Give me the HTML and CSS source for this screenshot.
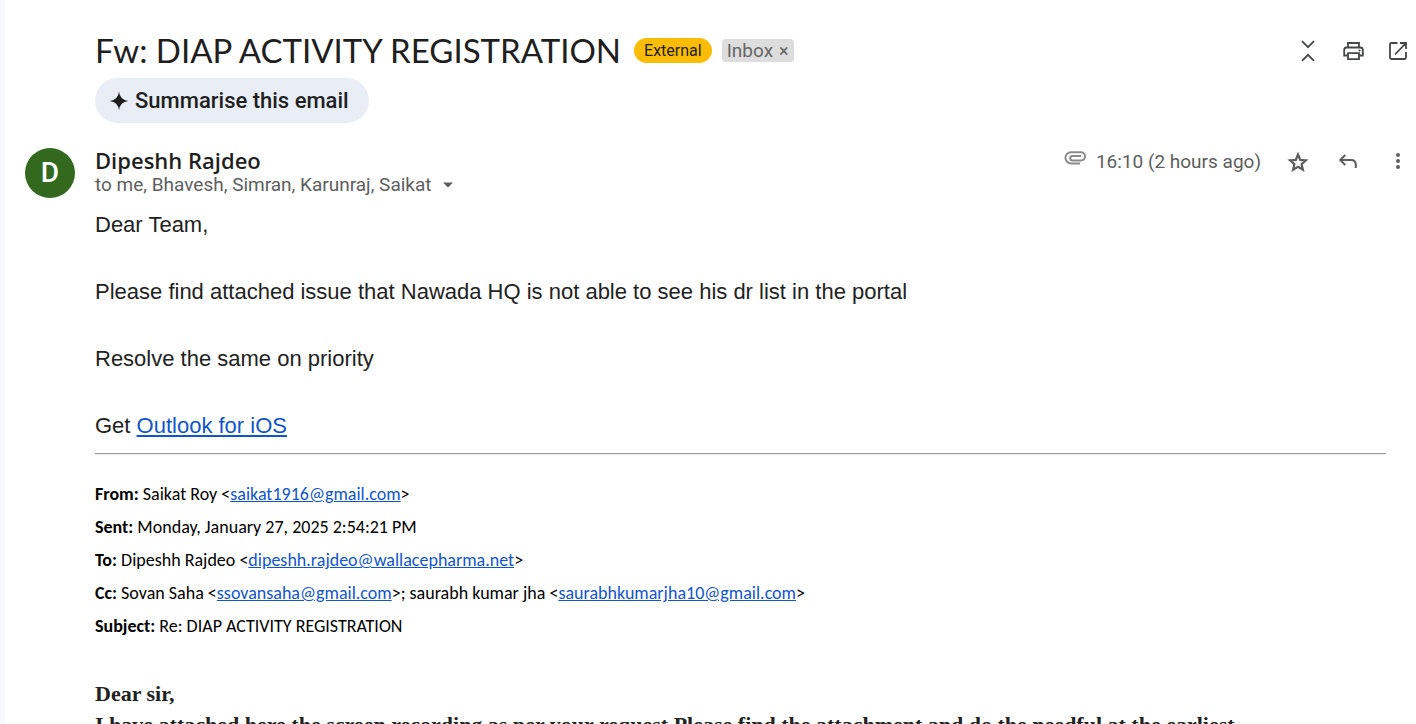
FILE: index.html
```
<!DOCTYPE html>
<html lang="en">
<head>
<meta charset="utf-8">
<meta name="viewport" content="width=device-width, initial-scale=1">
<title>Fw: DIAP ACTIVITY REGISTRATION</title>
<link rel="stylesheet" href="styles.css">
</head>
<body>
<main class="thread">
  <header class="subject-bar">
    <div class="subject">
      <h1 class="subject-title">Fw: DIAP ACTIVITY REGISTRATION</h1>
      <span class="tag-external">External</span>
      <span class="tag-inbox">Inbox <button class="tag-remove" type="button" aria-label="Remove label">×</button></span>
    </div>
    <div class="tools">
      <button class="icon-btn" type="button" aria-label="Collapse all"><svg width="26" height="26" viewBox="0 0 26 26"><path d="M7 3.2l6 6 6-6M7 22.8l6-6 6 6" fill="none" stroke="currentColor" stroke-width="1.8"/></svg></button>
      <button class="icon-btn" type="button" aria-label="Print all"><svg width="26" height="26" viewBox="0 0 26 26"><g fill="none" stroke="currentColor" stroke-width="1.8"><path d="M8 9.500V5h11v4.500M8 17.500H4.200V12c0-1.600 1-2.500 2.500-2.500h13.600c1.500 0 2.500.9 2.500 2.500v5.500H19"/><path d="M8 15.200h11v6H8z"/></g><circle cx="19.500" cy="12.600" r="1" fill="currentColor"/></svg></button>
      <button class="icon-btn" type="button" aria-label="In new window"><svg width="26" height="26" viewBox="0 0 26 26"><path d="M12.500 5H6.400Q5 5 5 6.400v13.200Q5 21 6.400 21h13.200q1.400 0 1.400-1.400V14M15 5h6v6M21 5L10 16.500" fill="none" stroke="currentColor" stroke-width="1.800"/></svg></button>
    </div>
  </header>

  <button class="summarise" type="button"><svg width="20" height="20" viewBox="0 0 20 20"><path d="M10 .8Q11 9 19.200 10 11 11 10 19.200 9 11 .8 10 9 9 10 .8z" fill="currentColor"/><path d="M10 5.500L14.500 10 10 14.500 5.500 10z" fill="currentColor"/></svg>Summarise this email</button>

  <article class="message">
    <div class="avatar">D</div>
    <div class="message-main">
      <div class="message-head">
        <div>
          <h2 class="sender">Dipeshh Rajdeo</h2>
          <button class="recipients" type="button">to me, Bhavesh, Simran, Karunraj, Saikat<svg width="10" height="6" viewBox="0 0 10 6"><path d="M0 .5h10L5 5.500z" fill="currentColor"/></svg></button>
        </div>
        <div class="meta">
          <svg class="clip" width="22" height="14" viewBox="0 0 22 14"><path d="M16 12.400H7A5.600 5.600 0 0 1 7 1.200h10a4 4 0 0 1 0 8.200H8.500a2.200 2.200 0 0 1 0-4.400H17" fill="none" stroke="currentColor" stroke-width="2"/></svg>
          <time class="time">16:10 (2 hours ago)</time>
          <button class="icon-btn" type="button" aria-label="Star"><svg width="26" height="26" viewBox="0 0 26 26"><path d="M13 5.500l2.200 5.400 5.700.5-4.300 3.800 1.300 5.600-4.900-3-4.900 3 1.300-5.600-4.300-3.800 5.700-.5z" fill="none" stroke="currentColor" stroke-width="2.200"/></svg></button>
          <button class="icon-btn" type="button" aria-label="Reply"><svg width="26" height="26" viewBox="0 0 26 26"><path d="M10.300 6L5.200 11l5.100 5M5.200 11H16q4.800 0 4.800 4.800V19" fill="none" stroke="currentColor" stroke-width="2"/></svg></button>
          <button class="icon-btn" type="button" aria-label="More"><svg width="26" height="26" viewBox="0 0 26 26" fill="currentColor"><circle cx="13" cy="6" r="2"/><circle cx="13" cy="12" r="2"/><circle cx="13" cy="18" r="2"/></svg></button>
        </div>
      </div>

      <div class="body">
        <p>Dear Team,</p>
        <p>Please find attached issue that Nawada HQ is not able to see his dr list in the portal</p>
        <p>Resolve the same on priority</p>
        <p>Get <a href="#outlook">Outlook for iOS</a></p>
      </div>
      <hr class="divider">
      <div class="forwarded">
        <div><b>From:</b> Saikat Roy &lt;<a href="#saikat">saikat1916@gmail.com</a>&gt;</div>
        <div><b>Sent:</b> Monday, January 27, 2025 2:54:21 PM</div>
        <div><b>To:</b> Dipeshh Rajdeo &lt;<a href="#dipeshh">dipeshh.rajdeo@wallacepharma.net</a>&gt;</div>
        <div><b>Cc:</b> Sovan Saha &lt;<a href="#sovan">ssovansaha@gmail.com</a>&gt;; saurabh kumar jha &lt;<a href="#saurabh">saurabhkumarjha10@gmail.com</a>&gt;</div>
        <div><b>Subject:</b> Re: DIAP ACTIVITY REGISTRATION</div>
      </div>
      <div class="quoted">
        <p class="greeting">Dear sir,</p>
        <p class="request">I have attached here the screen recording as per your request.Please find the attachment and do the needful at the earliest.</p>
      </div>
    </div>
  </article>
</main>
</body>
</html>
```
FILE: styles.css
```
* { box-sizing: border-box; }
body {
  margin: 0;
  background: #fff;
  color: #1f1f1f;
  font-family: Roboto, "Open Sans", sans-serif;
}
h1, h2, p { margin: 0; }
a { color: #1155cc; }
button {
  border: 0;
  padding: 0;
  background: none;
  color: inherit;
  font: inherit;
}
svg { display: block; flex: none; }
.thread {
  height: 100vh;
  overflow: hidden;
  border-left: 5px solid #f6f8fc;
  padding: 28px 5px 0 20px;
}
.subject-bar {
  display: flex;
  justify-content: space-between;
  align-items: center;
  padding-left: 70px;
}
.subject { display: flex; align-items: center; }
.subject-title {
  font-family: Lato, sans-serif;
  font-size: 33px;
  line-height: 44px;
  font-weight: 400;
}
.tag-external {
  margin-left: 13px;
  padding: 0 10px;
  border-radius: 13px;
  background: #fbbc04;
  font-size: 16px;
  line-height: 25px;
}
.tag-inbox {
  display: flex;
  gap: 6px;
  margin-left: 10px;
  padding: 0 5px;
  border-radius: 4px;
  background: #ddd;
  color: #666;
  font-size: 19px;
  line-height: 23px;
}
.tag-remove { font-size: 18px; }
.tools { display: flex; gap: 19px; padding-top: 2px; color: #444746; }
.summarise {
  display: flex;
  align-items: center;
  gap: 6px;
  height: 45px;
  margin: 6px 0 0 70px;
  padding: 0 20px 0 14px;
  border-radius: 23px;
  background: #e9eef6;
  font-size: 22px;
  font-weight: 500;
}
.message { display: flex; gap: 20px; margin-top: 25px; }
.avatar {
  flex: none;
  width: 50px;
  height: 50px;
  border-radius: 50%;
  background: #33691e;
  color: #fff;
  font-size: 28px;
  font-weight: 500;
  line-height: 50px;
  text-align: center;
}
.message-main { flex: 1; min-width: 0; }
.message-head { display: flex; justify-content: space-between; align-items: flex-start; }
.sender { font-family: "Open Sans", sans-serif; font-size: 22px; line-height: 24px; font-weight: 600; }
.recipients {
  display: flex;
  align-items: center;
  gap: 11px;
  color: #5e5e5e;
  font-size: 19px;
  line-height: 26px;
}
.meta { display: flex; align-items: center; padding-top: 1px; color: #5e5e5e; gap: 24px; }
.clip { color: #8a8a8a; margin: 0 -14px 8px 0; }
.time { font-size: 19px; line-height: 26px; }
.body {
  padding-top: 10px;
  color: #222;
  font-family: "Liberation Sans", Arial, sans-serif;
  font-size: 22px;
  line-height: 33px;
}
.body p + p { margin-top: 34px; }
.divider {
  margin: 11px 25px 0 0;
  border: 0;
  border-top: 1px solid #9a9a9a;
  border-bottom: 1px solid #eee;
}
.forwarded {
  display: grid;
  gap: 13px;
  margin-top: 29px;
  color: #000;
  font-family: Carlito, Lato, sans-serif;
  font-size: 18px;
  line-height: 20px;
}
.quoted {
  margin-top: 42px;
  color: #222;
  font-family: "Liberation Serif", "Times New Roman", serif;
  font-weight: 700;
  font-size: 22px;
  line-height: 31px;
  white-space: nowrap;
}
```
